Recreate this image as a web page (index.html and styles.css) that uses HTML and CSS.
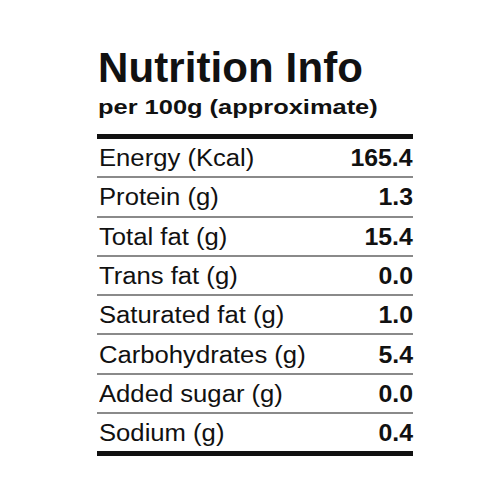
FILE: index.html
```html
<!DOCTYPE html>
<html>
<head>
<meta charset="utf-8">
<link rel="stylesheet" href="styles.css">
</head>
<body>
<div class="panel">
  <h1 class="title">Nutrition Info</h1>
  <p class="sub"><span class="wide">per 100g (approximate)</span></p>
  <div class="table">
    <div class="row"><span class="label">Energy (Kcal)</span><span class="val">165.4</span></div>
    <div class="row"><span class="label">Protein (g)</span><span class="val">1.3</span></div>
    <div class="row"><span class="label">Total fat (g)</span><span class="val">15.4</span></div>
    <div class="row"><span class="label">Trans fat (g)</span><span class="val">0.0</span></div>
    <div class="row"><span class="label">Saturated fat (g)</span><span class="val">1.0</span></div>
    <div class="row"><span class="label">Carbohydrates (g)</span><span class="val">5.4</span></div>
    <div class="row"><span class="label">Added sugar (g)</span><span class="val">0.0</span></div>
    <div class="row"><span class="label">Sodium (g)</span><span class="val">0.4</span></div>
  </div>
</div>
</body>
</html>
```
FILE: styles.css
```css
html, body {
  margin: 0;
  padding: 0;
  background: #fff;
}
body {
  font-family: "Liberation Sans", Arial, sans-serif;
  color: #111;
}
.panel {
  margin-left: 97px;
  width: 316px;
  padding-top: 47px;
}
.title {
  margin: 0 0 0 1px;
  font-size: 42px;
  line-height: 42px;
  font-weight: 700;
  letter-spacing: 0.1px;
}
.sub {
  margin: 6px 0 0 1px;
  height: 24px;
  font-size: 20.5px;
  line-height: 24px;
  font-weight: 700;
}
.wide {
  display: inline-block;
  transform: scaleX(1.24);
  transform-origin: left center;
}
.table {
  margin-top: 15px;
  border-top: 5px solid #111;
}
.row {
  display: flex;
  justify-content: space-between;
  align-items: center;
  box-sizing: border-box;
  height: 39.3px;
  padding-top: 1px;
  border-bottom: 2px solid #8a8a8a;
  font-size: 23px;
  line-height: 24px;
}
.row:last-child {
  height: 42.3px;
  border-bottom: 5px solid #111;
}
.label {
  display: inline-block;
  margin-left: 2px;
  transform: scaleX(1.115);
  transform-origin: left center;
}
.val {
  display: inline-block;
  font-weight: 700;
  transform: scaleX(1.08);
  transform-origin: right center;
}
```
